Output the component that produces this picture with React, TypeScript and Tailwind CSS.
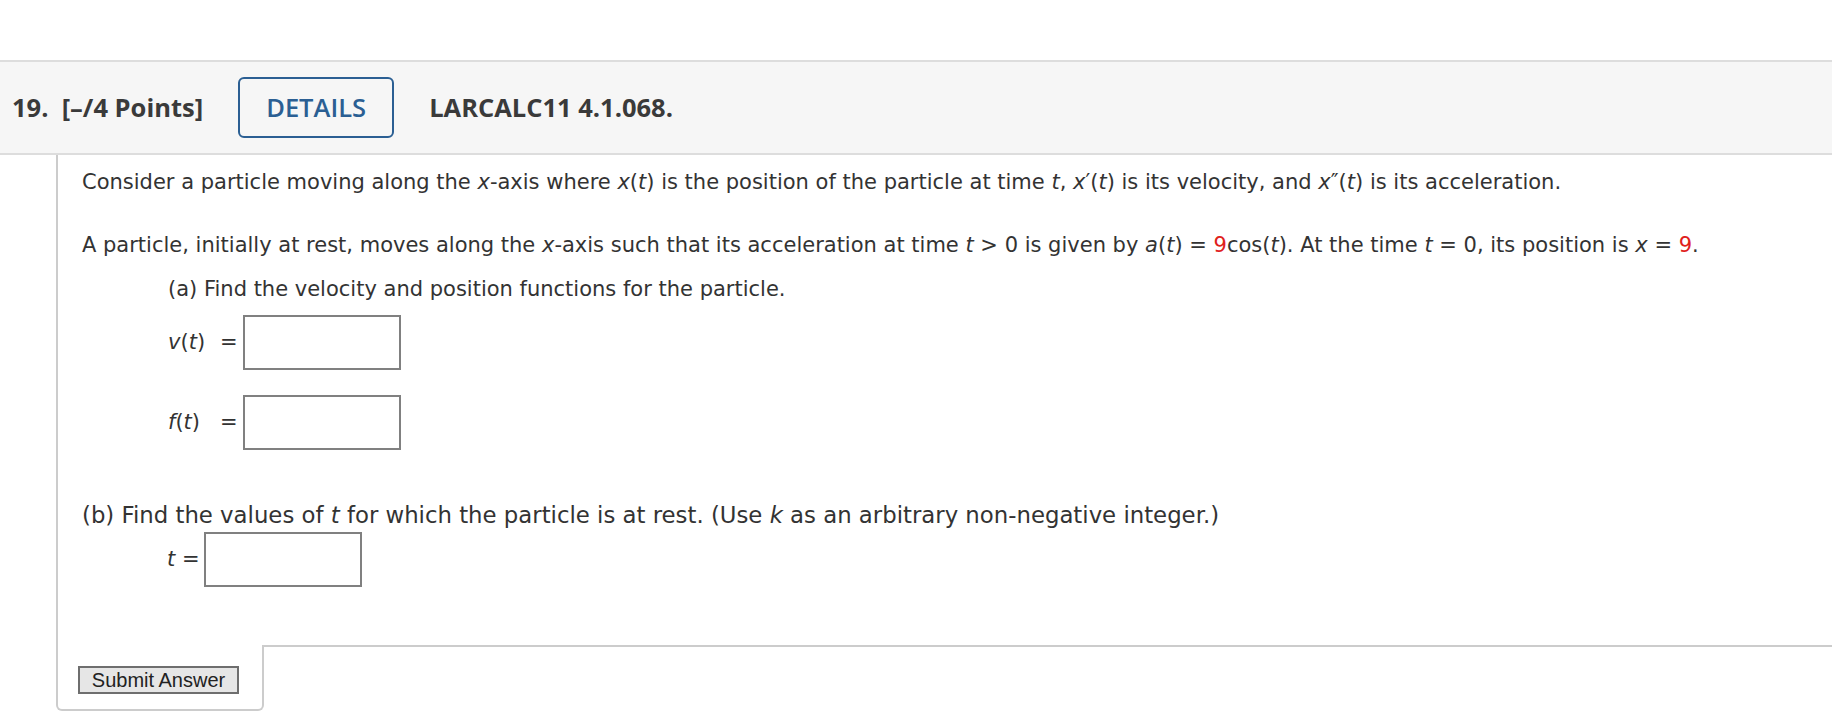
import React from 'react';

const body = "font-['DejaVu_Sans',Verdana,sans-serif]";

const I: React.FC<{ children: React.ReactNode }> = ({ children }) => <i className="italic">{children}</i>;

const Red: React.FC<{ children: React.ReactNode }> = ({ children }) => <span className="text-[#e0201b]">{children}</span>;

const AnswerBox: React.FC = () => (
    <input type="text" className="w-[158px] h-[55px] border-2 border-[#808080] bg-white outline-none" />
);

const App: React.FC = () => {
    return (
        <div className="min-h-[720px] bg-white pt-[60px] text-[#333333]">
            {/* question header */}
            <div className="flex items-center h-[95px] bg-[#f6f6f6] border-y-2 border-[#dddddd] pl-[12px] font-['Open_Sans',sans-serif] text-[25.5px] text-[#3a3a3a]">
                <span className="font-bold">19.&nbsp; [–/4 Points]</span>
                <button className="ml-[35px] w-[156px] h-[61px] border-2 border-[#2b5f93] rounded-[6px] text-[#2b5f93] font-semibold">DETAILS</button>
                <span className="ml-[35px] font-bold">LARCALC11 4.1.068.</span>
            </div>

            <div className="ml-[56px]">
                <div className={`border-l-2 border-[#cccccc] pl-[24px] pt-[15px] pb-[58px] text-[21px] leading-[25px] ${body}`}>
                    <p>
                        Consider a particle moving along the <I>x</I>-axis where <I>x</I>(<I>t</I>) is the position of the particle at time <I>t</I>, <I>x</I>′(<I>t</I>) is its velocity, and <I>x</I>″(<I>t</I>) is its acceleration.
                    </p>
                    <p className="mt-[38px]">
                        A particle, initially at rest, moves along the <I>x</I>-axis such that its acceleration at time <I>t</I> &gt; 0 is given by <I>a</I>(<I>t</I>) = <Red>9</Red>cos(<I>t</I>). At the time <I>t</I> = 0, its position is <I>x</I> = <Red>9</Red>.
                    </p>
                    <div className="ml-[86px]">
                        <p className="mt-[19px]">(a) Find the velocity and position functions for the particle.</p>
                        <div className="mt-[13px] flex items-center">
                            <span className="w-[52px]"><I>v</I>(<I>t</I>)</span>
                            <span className="w-[23px]">=</span>
                            <AnswerBox />
                        </div>
                        <div className="mt-[25px] flex items-center">
                            <span className="w-[52px]"><I>f</I>(<I>t</I>)</span>
                            <span className="w-[23px]">=</span>
                            <AnswerBox />
                        </div>
                    </div>
                    <p className="mt-[52px] text-[22.8px] leading-[26px]">
                        (b) Find the values of <I>t</I> for which the particle is at rest. (Use <I>k</I> as an arbitrary non-negative integer.)
                    </p>
                    <div className="mt-[4px] ml-[85px] flex items-center">
                        <span className="w-[37px]"><I>t</I> =</span>
                        <AnswerBox />
                    </div>
                </div>

                {/* submit tab */}
                <div className="flex">
                    <div className="w-[208px] h-[66px] border-x-2 border-b-2 border-[#cccccc] rounded-b-[6px] pl-[20px] pt-[21px]">
                        <button className="h-[28px] w-[161px] bg-[#e6e6e6] border-2 border-[#6e6e6e] font-['Liberation_Sans',Arial,sans-serif] text-[20px] leading-[22px] text-[#222222]">
                            Submit Answer
                        </button>
                    </div>
                    <div className="flex-1 border-t-2 border-[#cccccc]" />
                </div>
            </div>
        </div>
    );
};

export default App;
